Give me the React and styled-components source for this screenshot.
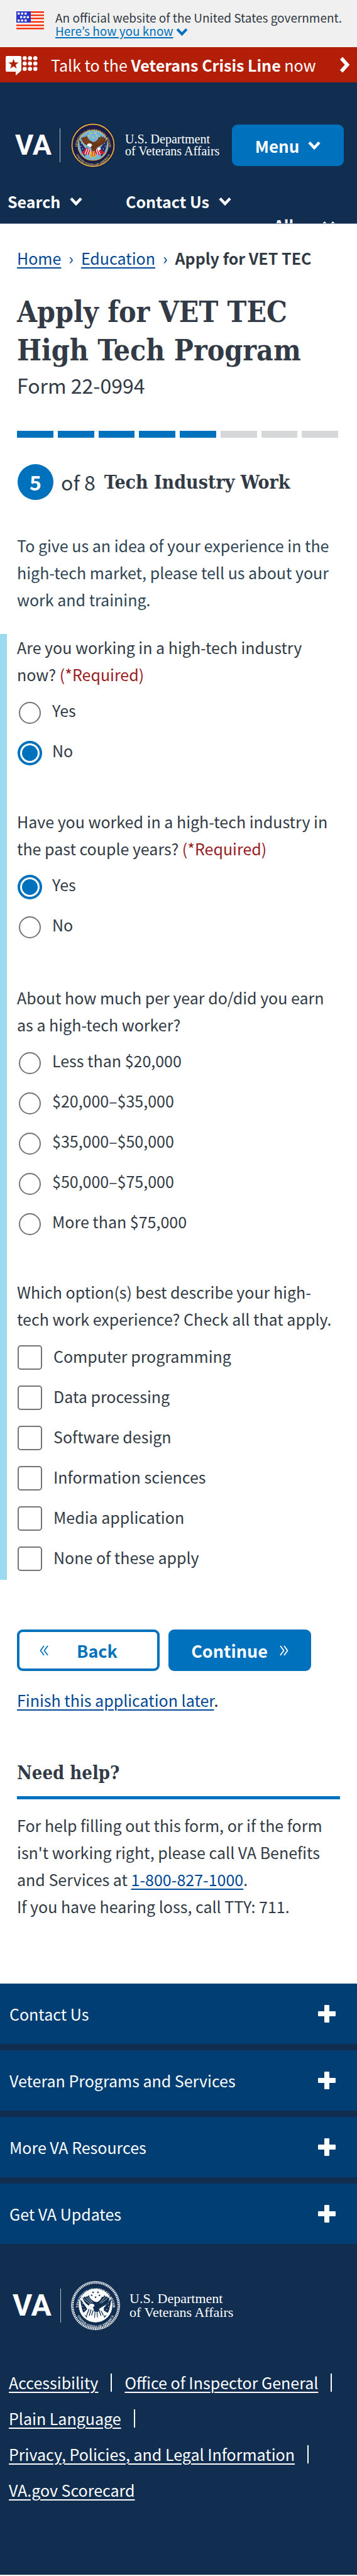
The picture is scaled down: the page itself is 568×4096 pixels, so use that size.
import React from "react";
import styled, { createGlobalStyle } from "styled-components";

const sans = '"Noto Sans CJK KR", "Open Sans", sans-serif';
const slab = '"DejaVu Serif Condensed", "DejaVu Serif", serif';
const c = {
  ink: "#323a45",
  blue: "#0071bc",
  link: "#004795",
  navy: "#112e51",
  panel: "#003e73",
  red: "#b31e08",
  required: "#981b1e",
};

const Global = createGlobalStyle`
  *, *::before, *::after { box-sizing: border-box; }
  body { margin: 0; background: #fff; color: ${c.ink}; font: 25px/43px ${sans}; }
  button, input { font: inherit; margin: 0; }
  h1, h2, p, ul, fieldset, legend { margin: 0; padding: 0; border: 0; }
`;

/* ---------- government banner ---------- */
const GovBanner = styled.section`
  display: flex;
  gap: 18px;
  height: 75px;
  padding: 17px 12px 0 26px;
  background: #f0f0f0;
`;
const FlagIcon = styled.svg`
  flex: none;
  width: 44px;
  height: 30px;
`;
const GovText = styled.p`
  font-size: 19px;
  line-height: 21px;
  white-space: nowrap;
`;
const GovLink = styled.a`
  margin-right: 4px;
  color: ${c.blue};
  text-decoration: underline;
  text-decoration-thickness: 2px;
  text-underline-offset: 2px;
`;

/* ---------- crisis line ---------- */
const CrisisBar = styled.a`
  display: flex;
  align-items: center;
  height: 56px;
  padding: 0 11px 0 9px;
  background: ${c.red};
  color: #fff;
  line-height: 56px;
  text-decoration: none;
  white-space: nowrap;
`;
const CrisisIcon = styled.svg`
  flex: none;
  width: 51px;
  height: 34px;
  margin-right: 21px;
`;
const CrisisText = styled.span`
  flex: 1;
`;

/* ---------- header ---------- */
const Header = styled.header`
  height: 225px;
  overflow: hidden;
  background: ${c.navy};
  border-bottom: 1px solid #6f7f98;
  color: #fff;
`;
const HeaderTop = styled.div`
  display: flex;
  align-items: center;
  justify-content: space-between;
  padding: 64px 21px 0 24px;
`;
const Logo = styled.a`
  display: flex;
  align-items: center;
  color: #fff;
  text-decoration: none;
`;
const LogoMark = styled.span`
  width: ${(p) => p.$width}px;
  font: 700 ${(p) => p.$size}px/60px Roboto, "Open Sans", sans-serif;
`;
const LogoRule = styled.span`
  width: 1px;
  height: 54px;
  margin: 0 16px 0 14px;
  background: #b8c0cc;
`;
const LogoSeal = styled.svg`
  width: ${(p) => p.$size}px;
  height: ${(p) => p.$size}px;
`;
const LogoName = styled.span`
  margin-left: 15px;
  font: ${(p) => p.$font} "Liberation Serif", serif;
  white-space: nowrap;
`;
const MenuButton = styled.button`
  display: flex;
  align-items: center;
  justify-content: center;
  gap: 14px;
  width: 178px;
  height: 66px;
  border: 0;
  border-radius: 9px;
  background: ${c.blue};
  color: #fff;
  font-size: 26px;
  font-weight: 700;
`;
const HeaderNav = styled.nav`
  display: flex;
  flex-wrap: wrap;
  padding: 34px 35px 0 12px;
`;
const NavButton = styled.button`
  display: flex;
  align-items: center;
  justify-content: ${(p) => (p.$end ? "flex-end" : "flex-start")};
  gap: 15px;
  width: ${(p) => p.$width};
  padding: 0;
  border: 0;
  background: none;
  color: #fff;
  font-weight: 700;
  line-height: 38px;
`;
const Chevron = styled.svg`
  flex: none;
  width: ${(p) => p.$w}px;
  height: ${(p) => p.$h}px;
`;

/* ---------- page body ---------- */
const Main = styled.main`
  padding: 34px 0 101px;
`;
const Gutter = styled.div`
  padding: 0 23px 0 27px;
`;
const Crumbs = styled.nav`
  display: flex;
  gap: 12px;
  line-height: 40px;
  color: ${c.link};
  white-space: nowrap;
`;
const Link = styled.a`
  color: ${c.link};
  text-decoration: underline;
  text-decoration-thickness: 2px;
  text-underline-offset: 4px;
`;
const CurrentCrumb = styled.strong`
  color: ${c.ink};
`;
const Title = styled.h1`
  margin-top: 36px;
  font: 700 46px/61px ${slab};
`;
const FormNumber = styled.p`
  margin-top: 4px;
  font-size: 32px;
  line-height: 40px;
`;
const Progress = styled.div`
  display: grid;
  grid-template-columns: repeat(8, 1fr);
  gap: 7px;
  height: 11px;
  margin: 53px 7px 42px 0;
`;
const Segment = styled.span`
  background: ${(p) => (p.$done ? c.blue : "#d6d7d9")};
`;
const Step = styled.div`
  display: flex;
  align-items: center;
  gap: 12px;
  height: 57px;
  font-size: 32px;
  white-space: nowrap;
`;
const StepNumber = styled.span`
  width: 57px;
  margin-left: 1px;
  border-radius: 50%;
  background: ${c.blue};
  color: #fff;
  font-weight: 700;
  line-height: 57px;
  text-align: center;
`;
const StepTitle = styled.h2`
  margin-left: 2px;
  font: 700 30px/40px ${slab};
`;
const Intro = styled.p`
  margin-top: 51px;
  color: #2e4453;
`;
const Questions = styled.form`
  margin-top: 33px;
  padding: 0 34px 14px 16px;
  border-left: 11px solid #9bdaf1;
`;
const Question = styled.fieldset`
  min-width: 0;
  margin-bottom: ${(p) => p.$after}px;
`;
const Required = styled.span`
  color: ${c.required};
`;
const Options = styled.div`
  display: grid;
  gap: 25px;
  padding: 20px 0 0 1px;
`;
const Option = styled.label`
  display: flex;
  align-items: flex-start;
  gap: ${(p) => (p.$box ? 18 : 16)}px;
  height: 39px;
  line-height: ${(p) => (p.$box ? 34 : 31)}px;
`;
const Radio = styled.input.attrs({ type: "radio" })`
  appearance: none;
  flex: none;
  width: 35px;
  height: 35px;
  margin: 2px;
  border: 2px solid #757575;
  border-radius: 50%;
  background: #fff;
  &:checked {
    width: 39px;
    height: 39px;
    margin: 0;
    padding: 3px;
    border: 4px solid ${c.blue};
    background: ${c.blue} content-box;
  }
`;
const Checkbox = styled.input.attrs({ type: "checkbox" })`
  appearance: none;
  flex: none;
  width: 39px;
  height: 39px;
  border: 2px solid #757575;
  border-radius: 5px;
  background: #fff;
  &:checked {
    background: ${c.blue};
  }
`;
const Actions = styled.div`
  display: grid;
  grid-template-columns: 1fr 1fr;
  gap: 14px;
  margin: 79px 50px 25px 0;
`;
const ActionButton = styled.button`
  display: flex;
  align-items: center;
  justify-content: ${(p) => (p.$primary ? "center" : "flex-start")};
  gap: ${(p) => (p.$primary ? 19 : 45)}px;
  height: 66px;
  padding: ${(p) => (p.$primary ? "0" : "0 32px")};
  border: ${(p) => (p.$primary ? "0" : `4px solid ${c.blue}`)};
  border-radius: 9px;
  background: ${(p) => (p.$primary ? c.blue : "#fff")};
  color: ${(p) => (p.$primary ? "#fff" : c.blue)};
  font-size: 27px;
  font-weight: 700;
`;
const Later = styled.p`
  line-height: 42px;
  color: #212121;
`;
const HelpTitle = styled.h2`
  margin: 77px 4px 20px 0;
  padding-bottom: 19px;
  border-bottom: 5px solid ${c.blue};
  font: 700 29px/36px ${slab};
`;

/* ---------- footer ---------- */
const Footer = styled.footer`
  padding-bottom: 106px;
  background: ${c.navy};
  color: #fff;
`;
const Accordions = styled.div`
  display: grid;
  gap: 10px;
`;
const AccordionButton = styled.button`
  display: flex;
  align-items: center;
  justify-content: space-between;
  height: 96px;
  padding: 0 34px 0 15px;
  border: 0;
  background: ${c.panel};
  color: #fff;
`;
const PlusIcon = styled.svg`
  width: 28px;
  height: 28px;
`;
const FooterLogo = styled.div`
  padding: 59px 20px 55px;
`;
const FooterLinks = styled.ul`
  display: flex;
  flex-wrap: wrap;
  padding: 0 14px;
  list-style: none;
`;
const FooterItem = styled.li`
  display: flex;
  align-items: center;
  gap: 20px;
  height: 57px;
  padding-right: 20px;
  &:not(:last-child)::after {
    content: "";
    width: 2px;
    height: 29px;
    background: #fff;
  }
`;
const FooterLink = styled(Link)`
  color: #fff;
`;

const Down = ({ w = 20, h = 14, color = "#fff" }) => (
  <Chevron $w={w} $h={h} viewBox="0 0 20 14" aria-hidden="true">
    <path d="M2 2.5 L10 11 L18 2.5" fill="none" stroke={color} strokeWidth="4.4" />
  </Chevron>
);

const Flag = () => (
  <FlagIcon viewBox="0 0 44 30" aria-hidden="true">
    <rect width="44" height="30" fill="#fff" />
    {[1, 6, 11, 16.5, 22, 27].map((y) => (
      <rect key={y} y={y} width="44" height="2.6" fill="#f5330f" />
    ))}
    <rect width="23" y="1" height="18" fill="#2b35c4" />
    {[[2, 3], [7.5, 3], [13, 3], [6, 8.6], [11.3, 8.6], [16.6, 8.6], [2, 14], [7.5, 14], [13, 14]].map(([x, y]) => (
      <rect key={`${x}-${y}`} x={x} y={y} width="3.4" height="3.2" fill="#fff" />
    ))}
  </FlagIcon>
);

const star = "M0 -10 L2.4 -3.2 L9.5 -3.1 L3.8 1.2 L5.9 8.1 L0 4 L-5.9 8.1 L-3.8 1.2 L-9.5 -3.1 L-2.4 -3.2 Z";

const Crisis = () => (
  <CrisisIcon viewBox="0 0 51 34" aria-hidden="true">
    <path d="M2 3 H23 Q25 3 25 5 V25 Q25 26.500 23 28 L16 34 V28 H2 Q0 28 0 26 V5 Q0 3 2 3 Z" fill="#fff" />
    <path d={star} transform="translate(12.5 16) scale(.86)" fill={c.red} />
    {[6.5, 15, 23.5].map((y) =>
      [30.3, 38.7, 47.2].map((x) => <circle key={`${x}-${y}`} cx={x} cy={y} r="3.3" fill="#fff" />)
    )}
  </CrisisIcon>
);

const Seal = ({ size, id, mono }) => {
  const k = mono
    ? { ring: c.navy, edge: "#fff", sky: "#fff", text: "#fff", wing: c.navy, head: "#fff", field: c.navy, stripe: "#fff", alt: c.navy, star: c.navy, tail: "#fff" }
    : { ring: "#1b1c47", edge: "#d9ae3c", sky: "#74b4d8", text: "#d8c477", wing: "#6b3517", head: "#fff", field: "#252a66", stripe: "#c5203a", alt: "#fff", star: "#f2d64b", tail: "#e8b52f" };
  return (
    <LogoSeal $size={size} viewBox="-50 -50 100 100" aria-hidden="true">
      <defs>
        <path id={`${id}-top`} d="M-35.5 4 A35.5 35.5 0 0 1 35.5 4" />
        <path id={`${id}-bottom`} d="M-41 4 A41 41 0 0 0 41 4" />
      </defs>
      <circle r="50" fill={k.ring} />
      {mono && <circle r="49.3" fill="none" stroke="#fff" strokeWidth="1.2" />}
      <circle r="46.5" fill="none" stroke={k.edge} strokeWidth={mono ? 3.6 : 2.6} strokeDasharray={mono ? "2.2 1.4" : "none"} />
      <circle r="33.5" fill={k.sky} stroke={k.edge} strokeWidth="1.4" />
      <g fill={k.text} fontFamily="Liberation Serif, serif" fontWeight="700" fontSize="6.4">
        <text textAnchor="middle"><textPath href={`#${id}-top`} startOffset="50%">DEPARTMENT OF VETERANS AFFAIRS</textPath></text>
        <text textAnchor="middle"><textPath href={`#${id}-bottom`} startOffset="50%">UNITED STATES OF AMERICA</textPath></text>
      </g>
      {[[-5, -27], [5, -27], [-8, -21], [8, -21], [0, -17]].map(([x, y]) => (
        <path key={`${x}${y}`} d={star} transform={`translate(${x} ${y}) scale(.27)`} fill={k.star} />
      ))}
      <path d="M-31 -14 L-15 10 L-18 25 Q-29 14 -31 -14 Z" fill={k.field} />
      <path d="M32 -15 L13 10 L18 25 Q30 14 32 -15 Z" fill={k.field} />
      {[[-27, 2], [-23, 8], [-26, -4], [-20, 14], [27, 2], [23, 8], [26, -4], [20, 13]].map(([x, y]) => (
        <circle key={`${x},${y}`} cx={x} cy={y} r=".9" fill="#fff" />
      ))}
      <path d="M-32 -15 L-13 7 M33 -16 L12 7" stroke={k.edge} strokeWidth="1.2" />
      <path d="M-14 4 Q-22 14 -26 15 Q-20 24 -8 20 L-2 14 Z" fill={k.stripe} />
      <path d="M12 5 Q20 14 27 15 Q20 24 8 20 L2 14 Z" fill={k.stripe} />
      <path d="M-13 7 L-18 20 M-9 8 L-13 21 M-5 10 L-8 20 M10 8 L16 20 M7 9 L11 21" stroke={k.alt} strokeWidth="1.7" />
      <path d="M-2 -8 Q-12 -13 -14 -22 Q-16 -16 -18 -20 Q-19 -15 -23 -19 Q-22 -14 -27 -17 Q-23 -3 -10 2 L-4 6 L-3 12 L5 14 L8 6 Q18 0 24 -4 Q29 -10 28 -17 Q25 -13 23 -20 Q21 -14 18 -22 Q17 -16 13 -18 Q10 -10 3 -7 Z" fill={k.wing} />
      <path d="M-24 -14 L-12 -4 M-19 -16 L-9 -5 M-15 -17 L-6 -6 M24 -15 L12 -5 M19 -17 L9 -5" stroke={mono ? "#fff" : "#a6642e"} strokeWidth="1" />
      <path d="M-13 1 Q-14 -4 -8 -4 Q-3 -4 -2 0 L-6 5 Q-9 1 -13 1 Z" fill={k.head} />
      <path d="M11 5 Q18 4 17 9 Q14 12 9 10 Z" fill={k.head} />
      <path d="M-5 14 L-7 25 L-3 29 L1 23 L5 28 L7 24 L4 13 Z" fill={k.tail} />
      <path d="M-1 13 L-2 25 M3 14 L4 24" stroke={mono ? c.navy : "#c5203a"} strokeWidth="1.5" />
    </LogoSeal>
  );
};

const VaLogo = ({ id, seal, mono, mark, size, font }) => (
  <Logo href="#home">
    <LogoMark $width={mark} $size={size}>VA</LogoMark>
    <LogoRule />
    <Seal size={seal} id={id} mono={mono} />
    <LogoName $font={font}>
      U.S. Department
      <br />
      of Veterans Affairs
    </LogoName>
  </Logo>
);

const questions = [
  { name: "working", after: 68, text: "Are you working in a high-tech industry now?", required: true, options: ["Yes", "No"], value: "No" },
  { name: "worked", after: 71, text: "Have you worked in a high-tech industry in the past couple years?", required: true, options: ["Yes", "No"], value: "Yes" },
  {
    name: "salary",
    after: 67,
    text: "About how much per year do/did you earn as a high-tech worker?",
    options: ["Less than $20,000", "$20,000–$35,000", "$35,000–$50,000", "$50,000–$75,000", "More than $75,000"],
  },
  {
    name: "experience",
    after: 0,
    many: true,
    text: "Which option(s) best describe your high-tech work experience? Check all that apply.",
    options: ["Computer programming", "Data processing", "Software design", "Information sciences", "Media application", "None of these apply"],
  },
];

const footerPanels = ["Contact Us", "Veteran Programs and Services", "More VA Resources", "Get VA Updates"];
const footerLinks = ["Accessibility", "Office of Inspector General", "Plain Language", "Privacy, Policies, and Legal Information", "VA.gov Scorecard"];

export default function App() {
  return (
    <>
      <Global />
      <GovBanner>
        <Flag />
        <GovText>
          An official website of the United States government.
          <br />
          <GovLink href="#know">Here’s how you know</GovLink>
          <Down w={19} h={13} color={c.blue} />
        </GovText>
      </GovBanner>
      <CrisisBar href="#crisis">
        <Crisis />
        <CrisisText>
          Talk to the <strong>Veterans Crisis Line</strong> now
        </CrisisText>
        <Chevron $w={17} $h={26} viewBox="0 0 17 26" aria-hidden="true">
          <path d="M3 2.5 L12.5 13 L3 23.5" fill="none" stroke="#fff" strokeWidth="5.6" />
        </Chevron>
      </CrisisBar>
      <Header>
        <HeaderTop>
          <VaLogo id="seal-color" seal={72} mark={57} size={45} font="20px/19px" />
          <MenuButton type="button">
            Menu <Down />
          </MenuButton>
        </HeaderTop>
        <HeaderNav>
          <NavButton type="button" $width="188px">
            Search <Down />
          </NavButton>
          <NavButton type="button" $width="190px">
            Contact Us <Down />
          </NavButton>
          <NavButton type="button" $width="100%" $end>
            Allen <Down />
          </NavButton>
        </HeaderNav>
      </Header>

      <Main>
        <Gutter>
          <Crumbs aria-label="Breadcrumb">
            <Link href="#home">Home</Link>
            <span>›</span>
            <Link href="#education">Education</Link>
            <span>›</span>
            <CurrentCrumb>Apply for VET TEC</CurrentCrumb>
          </Crumbs>
          <Title>
            Apply for VET TEC
            <br />
            High Tech Program
          </Title>
          <FormNumber>Form 22-0994</FormNumber>
          <Progress role="progressbar" aria-label="Form steps" aria-valuemin="1" aria-valuemax="8" aria-valuenow="5">
            {[1, 2, 3, 4, 5, 6, 7, 8].map((n) => (
              <Segment key={n} $done={n <= 5} />
            ))}
          </Progress>
          <Step>
            <StepNumber>5</StepNumber>
            <span>of 8</span>
            <StepTitle>Tech Industry Work</StepTitle>
          </Step>
          <Intro>
            To give us an idea of your experience in the high-tech market, please tell us about your work and training.
          </Intro>
        </Gutter>

        <Questions id="tech-form">
          {questions.map((q) => (
            <Question key={q.name} $after={q.after}>
              <legend>
                {q.text} {q.required && <Required>(*Required)</Required>}
              </legend>
              <Options>
                {q.options.map((o) => (
                  <Option key={o} $box={q.many}>
                    {q.many ? (
                      <Checkbox name={q.name} value={o} />
                    ) : (
                      <Radio name={q.name} value={o} defaultChecked={q.value === o} />
                    )}
                    {o}
                  </Option>
                ))}
              </Options>
            </Question>
          ))}
        </Questions>

        <Gutter>
          <Actions>
            <ActionButton type="button">
              <Chevron $w={14} $h={17} viewBox="0 0 14 17" aria-hidden="true">
                <path d="M7 1 L1.5 8.5 L7 16 M13 1 L7.5 8.5 L13 16" fill="none" stroke={c.blue} strokeWidth="1.8" />
              </Chevron>
              Back
            </ActionButton>
            <ActionButton type="submit" form="tech-form" $primary>
              Continue
              <Chevron $w={14} $h={17} viewBox="0 0 14 17" aria-hidden="true">
                <path d="M1 1 L6.5 8.5 L1 16 M7 1 L12.5 8.5 L7 16" fill="none" stroke="#fff" strokeWidth="1.8" />
              </Chevron>
            </ActionButton>
          </Actions>
          <Later>
            <Link href="#later">Finish this application later</Link>.
          </Later>
          <HelpTitle>Need help?</HelpTitle>
          <p>
            For help filling out this form, or if the form isn't working right, please call VA Benefits and Services at{" "}
            <Link href="tel:18008271000">1-800-827-1000</Link>.
            <br />
            If you have hearing loss, call TTY: 711.
          </p>
        </Gutter>
      </Main>

      <Footer>
        <Accordions>
          {footerPanels.map((t) => (
            <AccordionButton key={t} type="button" aria-expanded="false">
              {t}
              <PlusIcon viewBox="0 0 28 28" aria-hidden="true">
                <rect x="10" width="8" height="28" rx="1" fill="#fff" />
                <rect y="10" width="28" height="8" rx="1" fill="#fff" />
              </PlusIcon>
            </AccordionButton>
          ))}
        </Accordions>
        <FooterLogo>
          <VaLogo id="seal-mono" seal={78} mark={62} size={48} font="22px/22px" mono />
        </FooterLogo>
        <FooterLinks>
          {footerLinks.map((t) => (
            <FooterItem key={t}>
              <FooterLink href="#footer">{t}</FooterLink>
            </FooterItem>
          ))}
        </FooterLinks>
      </Footer>
    </>
  );
}
